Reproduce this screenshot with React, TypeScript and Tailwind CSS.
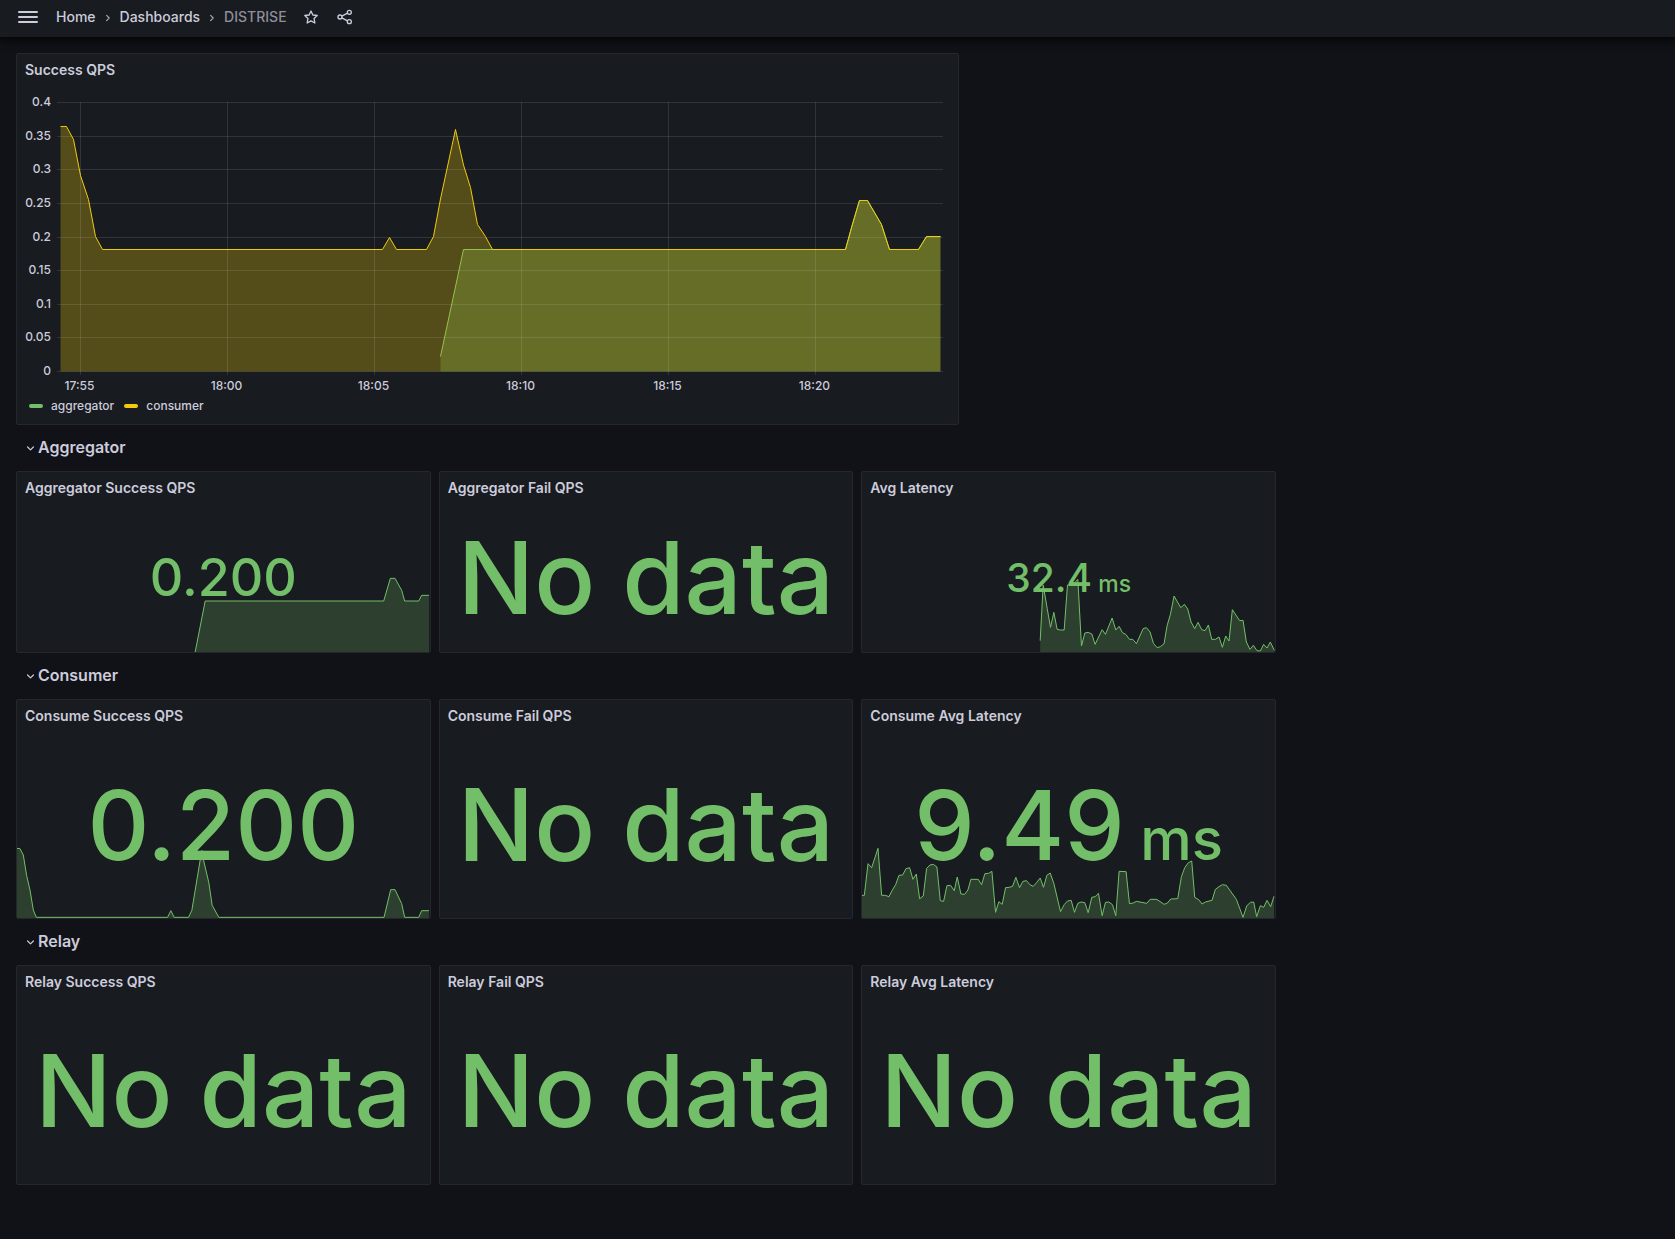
import React from "react";

const GREEN = "#73bf69";
const YELLOW = "#f2cc0c";

type Pts = [number, number][];
const join = (pts: Pts) => pts.map(([x, y]) => `${x},${y}`).join(" ");
const area = (pts: Pts, base: number) =>
  `${pts[0][0]},${base} ${join(pts)} ${pts[pts.length - 1][0]},${base}`;

const tail: Pts = [
  [845.5, 249.5], [852, 226], [859.5, 200.5], [867.5, 200.5], [881.5, 224.5],
  [889.5, 249.5], [918.5, 249.5], [926.5, 236.5], [940.5, 236.5],
];
const consumer: Pts = [
  [60.5, 126.5], [66.5, 126.5], [73.5, 139.5], [80.5, 175.5], [88.5, 199.5], [95.5, 236.5],
  [102.5, 249.5], [382.5, 249.5], [389.5, 237.5], [396.5, 249.5], [426.5, 249.5], [433.5, 236.5],
  [440.5, 199], [455.5, 129.5], [463.5, 165], [470.5, 187.5], [477.5, 224.5], [485.5, 236.5],
  [492.5, 249.5], ...tail,
];
const aggregator: Pts = [[440.5, 356.5], [463.5, 249.5], ...tail];

const yTicks = ["0.4", "0.35", "0.3", "0.25", "0.2", "0.15", "0.1", "0.05", "0"];
const yPos = [102.5, 136.5, 169.5, 203.5, 237.5, 270.5, 304.5, 337.5, 371.5];
const xTicks = ["17:55", "18:00", "18:05", "18:10", "18:15", "18:20"];
const xPos = [80.5, 227.5, 374.5, 521.5, 668.5, 815.5];

function TimeSeries() {
  return (
    <svg viewBox="17 86 941 308" className="block h-auto w-full" role="img" aria-label="Success QPS over time">
      <polygon points={area(aggregator, 371.5)} fill={GREEN} fillOpacity="0.28" />
      <polyline points={join(aggregator)} fill="none" stroke={GREEN} />
      <polygon points={area(consumer, 371.5)} fill={YELLOW} fillOpacity="0.28" />
      <polyline points={join(consumer)} fill="none" stroke={YELLOW} />
      <g stroke="rgb(240,250,255)" strokeOpacity="0.12">
        {yPos.map((y) => <line key={y} x1="57" x2="943" y1={y} y2={y} />)}
        {xPos.map((x) => <line key={x} x1={x} x2={x} y1="102" y2="375" />)}
      </g>
      <g fill="#ccccdc" fontSize="12" className="font-[Inter] font-medium">
        {yTicks.map((t, i) => (
          <text key={t} x="51" y={yPos[i] + 4} textAnchor="end">{t}</text>
        ))}
        {xTicks.map((t, i) => (
          <text key={t} x={xPos[i] - 1} y="390" textAnchor="middle">{t}</text>
        ))}
      </g>
    </svg>
  );
}

/* Sparkline traces are kept at three units per pixel, measured from the top left of their view box. */
type Spark = { pts: Pts; x: number; bottom: number };

const aggSuccess: Spark = {
  x: 51,
  bottom: 876,
  pts: [
    [586, 876], [616, 723], [1152, 723], [1172, 655], [1186, 655], [1206, 691], [1215, 723],
    [1257, 723], [1266, 706], [1288, 706],
  ],
};
const aggLatency: Spark = {
  x: -504,
  bottom: 336,
  pts: [
    [31, 302], [40, 135], [52, 205], [62, 262], [72, 217], [82, 268], [92, 270], [103, 270], [113, 135],
    [133, 130], [144, 118], [155, 318], [165, 279], [175, 277], [186, 282], [196, 313], [217, 269], [227, 283],
    [247, 234], [258, 270], [268, 259], [278, 278], [288, 283], [299, 298], [309, 298], [320, 311],
    [340, 266], [350, 263], [361, 276], [371, 310], [382, 323], [392, 320], [403, 311], [412, 257],
    [422, 223], [433, 168], [453, 203], [464, 193], [474, 207], [484, 246], [495, 266], [505, 247],
    [516, 269], [526, 272], [536, 255], [546, 298], [557, 298], [568, 291], [578, 322], [588, 288],
    [598, 303], [608, 209], [630, 242], [640, 241], [650, 306], [661, 328], [671, 316], [682, 332],
    [692, 333], [702, 313], [712, 324], [722, 306], [734, 331],
  ],
};
const conSuccess: Spark = {
  x: 51,
  bottom: 774,
  pts: [
    [51, 565], [60, 566], [70, 585], [80, 647], [90, 690], [100, 750], [109, 772], [503, 772],
    [513, 752], [523, 772], [566, 772], [576, 751], [601, 600], [606, 571], [611, 600], [627, 668],
    [637, 736], [657, 772], [1153, 772], [1173, 689], [1186, 689], [1206, 731], [1215, 772],
    [1257, 772], [1266, 752], [1288, 752],
  ],
};
const conLatency: Spark = {
  x: 36,
  bottom: 684,
  pts: [
    [36, 616], [43, 616], [54, 521], [65, 533], [84, 475], [95, 616], [106, 616], [117, 620],
    [126, 602], [137, 584], [147, 556], [158, 555], [168, 536], [179, 533], [189, 568], [199, 552],
    [209, 626], [220, 618], [230, 535], [240, 525], [250, 523], [261, 531], [271, 632], [281, 634],
    [291, 587], [302, 586], [313, 602], [322, 561], [333, 612], [344, 613], [354, 600], [363, 568],
    [385, 568], [395, 584], [405, 551], [416, 550], [426, 544], [437, 667], [447, 635], [457, 643],
    [467, 593], [478, 592], [488, 589], [498, 562], [509, 593], [519, 574], [530, 572], [540, 584],
    [550, 589], [560, 578], [571, 564], [581, 592], [591, 556], [601, 549], [612, 580], [632, 665],
    [643, 644], [653, 633], [664, 631], [674, 667], [684, 640], [694, 636], [705, 638], [715, 668],
    [726, 622], [736, 620], [746, 610], [757, 677], [767, 637], [777, 636], [788, 644], [798, 677],
    [808, 544], [829, 545], [839, 641], [850, 639], [860, 634], [891, 640], [901, 628], [921, 628],
    [943, 643], [953, 639], [963, 627], [984, 626], [995, 560], [1005, 533], [1016, 518],
    [1026, 513], [1035, 622], [1047, 629], [1057, 642], [1067, 636], [1087, 631], [1097, 598],
    [1108, 590], [1118, 584], [1130, 586], [1160, 628], [1180, 682], [1191, 648], [1202, 637],
    [1212, 636], [1221, 680], [1232, 647], [1242, 652], [1252, 631], [1263, 650], [1273, 619],
  ],
};

function Sparkline({ spark }: { spark: Spark }) {
  return (
    <svg
      viewBox={`${spark.x} ${spark.bottom - 240} 1239 240`}
      preserveAspectRatio="none"
      className="absolute inset-x-0 bottom-0 h-20 w-full"
      aria-hidden="true"
    >
      <polygon points={area(spark.pts, spark.bottom)} fill={GREEN} fillOpacity="0.23" />
      <polyline points={join(spark.pts)} fill="none" stroke={GREEN} vectorEffect="non-scaling-stroke" />
    </svg>
  );
}

function Panel({ title, className, children }: { title: string; className: string; children: React.ReactNode }) {
  return (
    <section className={`relative flex flex-col overflow-hidden rounded-xs border border-[#25272c] bg-[#181b1f] ${className}`}>
      <h2 className="flex h-8 shrink-0 items-center px-2 text-sm font-semibold">{title}</h2>
      {children}
    </section>
  );
}

type StatProps = { title: string; value: string; unit?: string; size: string; unitSize?: string; height: string; spark?: Spark };

function Stat({ title, value, unit, size, unitSize, height, spark }: StatProps) {
  return (
    <Panel title={title} className={`col-span-8 ${height}`}>
      {spark && <Sparkline spark={spark} />}
      <div className="relative flex flex-1 items-center justify-center font-medium whitespace-pre text-[#73bf69]">
        <p className={`leading-none ${size}`}>
          {value}
          {unit && <span className={unitSize}> {unit}</span>}
        </p>
      </div>
    </Panel>
  );
}

function Row({ title }: { title: string }) {
  return (
    <div className="col-span-24 flex h-[30px] items-center pb-0.5 pl-2">
      <button type="button" className="flex items-center text-base font-semibold">
        <svg width="14" height="14" viewBox="0 0 14 14" fill="none" className="mt-1" aria-hidden="true">
          <path d="M3.6 5 L6.5 7.9 L9.4 5" stroke="#ccccdc" strokeWidth="1.2" strokeLinecap="round" strokeLinejoin="round" />
        </svg>
        {title}
      </button>
    </div>
  );
}

function Crumb() {
  return (
    <svg width="6" height="10" viewBox="0 0 6 10" fill="none" className="mt-0.5" aria-hidden="true">
      <path d="M1.6 2.4 L4.2 5 L1.6 7.6" stroke="#a5a6b3" strokeWidth="1.2" strokeLinecap="round" strokeLinejoin="round" />
    </svg>
  );
}

export default function App() {
  return (
    <div className="min-h-screen bg-[#111217] font-[Inter,sans-serif] text-[#ccccdc]">
      <header className="relative flex h-[37px] items-center bg-[#181b1f] pb-[3px] pl-4 text-sm shadow-[0_2px_8px_2px_#000000b0]">
        <button type="button" aria-label="Menu" className="mr-4">
          <svg width="24" height="24" viewBox="0 0 24 24" fill="none" stroke="#ccccdc" strokeWidth="2" strokeLinecap="round">
            <path d="M3 7H21M3 12H21M3 17H21" />
          </svg>
        </button>
        <nav aria-label="Breadcrumbs" className="flex items-center gap-[9px] font-medium">
          <a href="#">Home</a>
          <Crumb />
          <a href="#">Dashboards</a>
          <Crumb />
          <span className="text-[#8e8f9b]">DISTRISE</span>
        </nav>
        <button type="button" aria-label="Mark as favorite" className="ml-4">
          <svg width="16" height="16" viewBox="0 0 24 24" fill="none" stroke="#ccccdc" strokeWidth="2" strokeLinejoin="round">
            <path d="M12 3 L14.8 9 L21.3 9.8 L16.6 14.4 L17.8 21 L12 17.8 L6.2 21 L7.4 14.4 L2.7 9.8 L9.2 9 Z" />
          </svg>
        </button>
        <button type="button" aria-label="Share dashboard" className="ml-[18px]">
          <svg width="16" height="16" viewBox="0 0 24 24" fill="none" stroke="#ccccdc" strokeWidth="2">
            <circle cx="18.5" cy="5" r="3" />
            <circle cx="4.5" cy="12" r="3" />
            <circle cx="18.5" cy="19" r="3" />
            <path d="M7.2 10.7 L15.8 6.3 M7.2 13.3 L15.8 17.7" />
          </svg>
        </button>
      </header>
      <main className="p-4">
        <div className="grid w-full max-w-[1260px] grid-cols-24 gap-2">
          <Panel title="Success QPS" className="col-span-18">
            <TimeSeries />
            <ul className="flex h-6 items-center gap-[10px] pl-3 text-xs font-medium">
              <li className="flex items-center gap-2">
                <span className="h-1 w-[14px] rounded-full bg-[#73bf69]" />
                aggregator
              </li>
              <li className="flex items-center gap-2">
                <span className="h-1 w-[14px] rounded-full bg-[#f2cc0c]" />
                consumer
              </li>
            </ul>
            <div className="h-1.5" />
          </Panel>

          <Row title="Aggregator" />
          <Stat title="Aggregator Success QPS" value="0.200" size="text-[52px]" height="h-[182px]" spark={aggSuccess} />
          <Stat title="Aggregator Fail QPS" value="No data" size="text-[101px]" height="h-[182px]" />
          <Stat title="Avg Latency" value="32.4" unit="ms" size="text-[39px]" unitSize="text-[23px]" height="h-[182px]" spark={aggLatency} />

          <Row title="Consumer" />
          <Stat title="Consume Success QPS" value="0.200" size="text-[96px]" height="h-[220px]" spark={conSuccess} />
          <Stat title="Consume Fail QPS" value="No data" size="text-[101px]" height="h-[220px]" />
          <Stat title="Consume Avg Latency" value="9.49" unit="ms" size="text-[96px]" unitSize="text-[58px]" height="h-[220px]" spark={conLatency} />

          <Row title="Relay" />
          <Stat title="Relay Success QPS" value="No data" size="text-[101px]" height="h-[220px]" />
          <Stat title="Relay Fail QPS" value="No data" size="text-[101px]" height="h-[220px]" />
          <Stat title="Relay Avg Latency" value="No data" size="text-[101px]" height="h-[220px]" />
        </div>
      </main>
    </div>
  );
}
